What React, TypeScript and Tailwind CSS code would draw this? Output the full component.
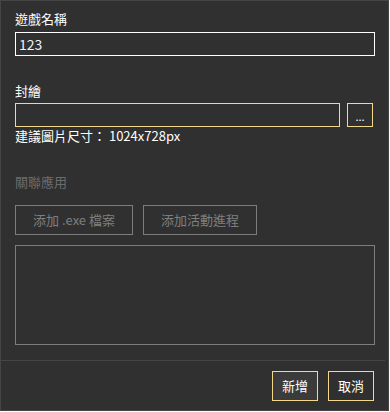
import React from "react";

const font = { fontFamily: '"Noto Sans CJK TC", "Noto Sans", sans-serif' };

export default function App() {
  return (
    <div style={font} className="w-[389px] h-[411px] border border-[#454545] bg-[#303030] flex flex-col text-[13px] leading-[18px] text-white">
      <div className="flex flex-col px-[14px]">
        <div className="pt-[9px] h-[27px]">遊戲名稱</div>
        <div className="mt-[4px] h-[24px] w-[360px] border border-white flex items-center px-[3px] text-[14px] text-[#f0f0f0]">123</div>
        <div className="mt-[26px] h-[18px]">封繪</div>
        <div className="mt-[3px] flex gap-[7px] w-[358px]">
          <div className="h-[24px] w-[325px] border border-[#f3d88c]"></div>
          <div className="h-[24px] w-[26px] border border-[#f3d88c] flex items-center justify-center text-[11px] leading-none pt-[2px]">...</div>
        </div>
        <div className="h-[18px]">建議圖片尺寸： 1024x728px</div>
        <div className="mt-[28px] h-[18px] text-[#6c6c6c]">關聯應用</div>
        <div className="mt-[14px] flex gap-[10px]">
          <div className="h-[30px] w-[118px] border border-[#7d7d7d] flex items-center justify-center text-[#7f7f7f]">添加 .exe 檔案</div>
          <div className="h-[30px] w-[114px] border border-[#7d7d7d] flex items-center justify-center text-[#7f7f7f]">添加活動進程</div>
        </div>
        <div className="mt-[10px] h-[100px] w-[360px] border border-[#7d7d7d]"></div>
      </div>
      <div className="mt-[15px] h-px w-[384px] bg-[#454545]"></div>
      <div className="mt-[10px] flex justify-end gap-[10px] pr-[14px]">
        <div className="h-[30px] w-[46px] border border-[#f3d88c] bg-[#3b3b3b] flex items-center justify-center">新增</div>
        <div className="h-[30px] w-[46px] border border-[#f3d88c] flex items-center justify-center">取消</div>
      </div>
    </div>
  );
}
